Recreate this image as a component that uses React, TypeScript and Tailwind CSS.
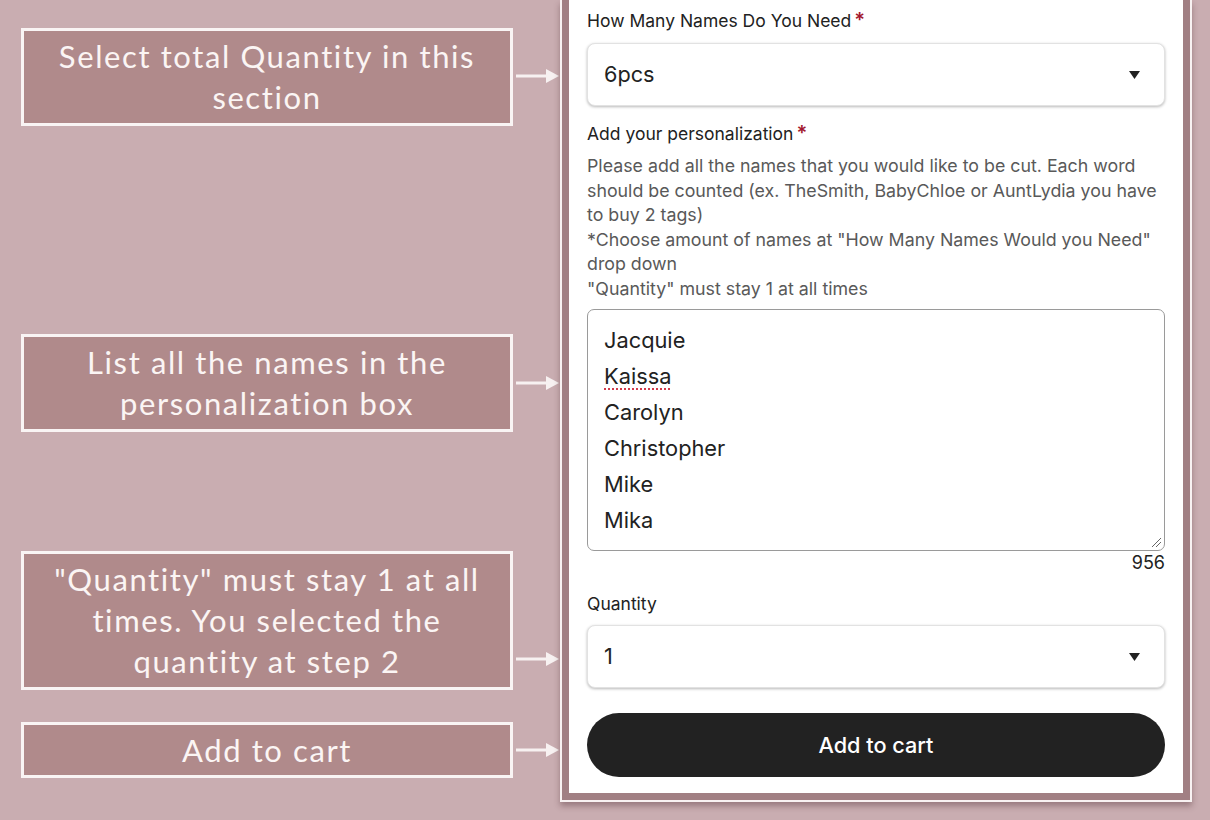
import React from "react";

const Arrow = () => (
  <svg width="44" height="16" viewBox="0 0 44 16" className="block">
    <rect x="0" y="6.5" width="32" height="3" fill="#f7f1f1" />
    <polygon points="30,1 43,8 30,15" fill="#f7f1f1" />
  </svg>
);

const Caret = () => (
  <svg width="11" height="8" viewBox="0 0 11 8" className="block">
    <polygon points="0,0 11,0 5.5,8" fill="#222222" />
  </svg>
);

const LabelBox = ({ lines, h }: { lines: string[]; h: string }) => (
  <div
    className={`w-[492px] shrink-0 ${h} border-[3px] border-[#f9f4f4] bg-[#b08a8b] flex flex-col items-center justify-center text-[#fbf5f4] text-[31px] leading-[41px] tracking-[1.6px] text-center`}
    style={{ fontFamily: "Lato, 'Open Sans', sans-serif" }}
  >
    {lines.map((l) => (
      <div key={l}>{l}</div>
    ))}
  </div>
);

const Select = ({ value }: { value: string }) => (
  <div className="h-[63px] w-full rounded-[8px] border border-[#e2e2e2] bg-white shadow-[0_1px_3px_rgba(0,0,0,0.28)] flex items-center justify-between pl-[16px] pr-[24px]">
    <span className="text-[21.7px] text-[#222]">{value}</span>
    <Caret />
  </div>
);

const Star = () => <span className="text-[#a3182f] ml-[3px] text-[20px] font-semibold leading-none">*</span>;

export default function App() {
  return (
    <div
      className="w-[1210px] h-[820px] overflow-hidden bg-[#c9adb1] flex"
      style={{ fontFamily: "Inter, 'Noto Sans', sans-serif" }}
    >
      {/* left column */}
      <div className="flex flex-col pl-[21px] w-[560px] shrink-0">
        <div className="mt-[28px] flex items-center">
          <LabelBox h="h-[98px]" lines={["Select total Quantity in this", "section"]} />
          <div className="ml-[3px] mt-[-2px]"><Arrow /></div>
        </div>
        <div className="mt-[208px] flex items-center">
          <LabelBox h="h-[98px]" lines={["List all the names in the", "personalization box"]} />
          <div className="ml-[3px]"><Arrow /></div>
        </div>
        <div className="mt-[119px] flex items-end">
          <LabelBox h="h-[139px]" lines={['"Quantity" must stay 1 at all', "times. You selected the", "quantity at step 2"]} />
          <div className="ml-[3px] mb-[23px]"><Arrow /></div>
        </div>
        <div className="mt-[32px] flex items-center">
          <LabelBox h="h-[56px]" lines={["Add to cart"]} />
          <div className="ml-[3px]"><Arrow /></div>
        </div>
      </div>

      {/* right panel */}
      <div className="w-[632px] shrink-0 h-[802px] border-[2px] border-t-0 border-[#f8f2f2] shadow-[0_4px_6px_rgba(60,30,35,0.35)]">
        <div className="h-full border-[7px] border-t-0 border-[#a17f83] bg-white px-[18px] pt-[9px] flex flex-col">
          <div className="h-[24px] text-[17.5px] leading-[24px] text-[#222]">
            How Many Names Do You Need<Star />
          </div>
          <div className="mt-[10px]">
            <Select value="6pcs" />
          </div>
          <div className="mt-[16px] h-[24px] text-[17.5px] leading-[24px] text-[#222]">
            Add your personalization<Star />
          </div>
          <div className="mt-[8px] text-[17.8px] leading-[24.5px] text-[#595959] whitespace-nowrap">
            <div>Please add all the names that you would like to be cut. Each word</div>
            <div>should be counted (ex. TheSmith, BabyChloe or AuntLydia you have</div>
            <div>to buy 2 tags)</div>
            <div>*Choose amount of names at "How Many Names Would you Need"</div>
            <div>drop down</div>
            <div>"Quantity" must stay 1 at all times</div>
          </div>
          <div className="mt-[8px] relative h-[242px] rounded-[7px] border border-[#9a9a9a] pl-[16px] pt-[12px] text-[21.8px] leading-[36px] text-[#222]">
            <div>Jacquie</div>
            <div>
              <span className="underline decoration-dotted decoration-[#d23c4c] decoration-2 underline-offset-[4px]">Kaissa</span>
            </div>
            <div>Carolyn</div>
            <div>Christopher</div>
            <div>Mike</div>
            <div>Mika</div>
            <svg width="11" height="11" viewBox="0 0 11 11" className="absolute right-[2px] bottom-[2px]">
              <line x1="1" y1="10" x2="10" y2="1" stroke="#666" strokeWidth="1" />
              <line x1="5" y1="10" x2="10" y2="5" stroke="#666" strokeWidth="1" />
            </svg>
          </div>
          <div className="text-right text-[18px] leading-[24px] text-[#222]">956</div>
          <div className="mt-[17px] text-[17.5px] leading-[24px] text-[#222]">Quantity</div>
          <div className="mt-[9px]">
            <Select value="1" />
          </div>
          <div className="mt-[25px] h-[64px] rounded-full bg-[#222222] flex items-center justify-center text-white text-[21.7px] font-medium">
            Add to cart
          </div>
        </div>
      </div>
    </div>
  );
}
